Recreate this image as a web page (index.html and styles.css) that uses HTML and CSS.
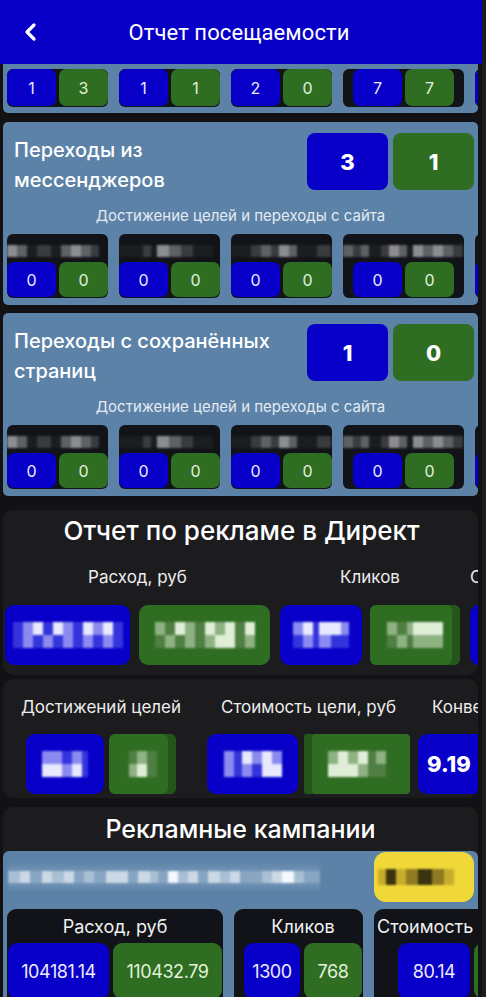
FILE: index.html
```html
<!DOCTYPE html>
<html lang="ru">
<head>
<meta charset="utf-8">
<title>Отчет посещаемости</title>
<link rel="stylesheet" href="styles.css">
</head>
<body>
<div class="app">
  <header class="topbar">
    <svg class="back" viewBox="0 0 14 20" aria-hidden="true"><path d="M11 3 L4 10 L11 17" fill="none" stroke="#fff" stroke-width="3.2" stroke-linecap="round" stroke-linejoin="round"/></svg>
    <h1>Отчет посещаемости</h1>
  </header>

  <main class="content">
    <section class="card card-partial">
      <div class="groups">
        <div class="group"><div class="pair"><div class="v blue">1</div><div class="v green">3</div></div></div>
        <div class="group"><div class="pair"><div class="v blue">1</div><div class="v green">1</div></div></div>
        <div class="group"><div class="pair"><div class="v blue">2</div><div class="v green">0</div></div></div>
        <div class="group wide"><div class="pair"><div class="v blue">7</div><div class="v green">7</div></div></div>
        <div class="group"><div class="pair"><div class="v blue">0</div><div class="v green">0</div></div></div>
      </div>
    </section>

    <section class="card">
      <div class="card-head">
        <h2>Переходы из<br>мессенджеров</h2>
        <div class="big-pair"><div class="big blue">3</div><div class="big green">1</div></div>
      </div>
      <p class="sub">Достижение целей и переходы с сайта</p>
      <div class="groups">
        <div class="group">
          <div class="glabel"><div class="pix"><i class="l w10"></i><i class="m w10"></i><i class="k w10"></i><i class="d w14"></i><i class="k w10"></i><i class="m w10"></i><i class="l w10"></i><i class="m w10"></i><i class="d w8"></i></div></div>
          <div class="pair"><div class="v blue">0</div><div class="v green">0</div></div>
        </div>
        <div class="group">
          <div class="glabel"><div class="pix"><i class="k w24"></i><i class="d w8"></i><i class="k w6"></i><i class="l w12"></i><i class="m w12"></i><i class="d w12"></i><i class="k w20"></i></div></div>
          <div class="pair"><div class="v blue">0</div><div class="v green">0</div></div>
        </div>
        <div class="group">
          <div class="glabel"><div class="pix"><i class="k w20"></i><i class="d w10"></i><i class="m w10"></i><i class="d w8"></i><i class="l w10"></i><i class="m w8"></i><i class="k w20"></i><i class="d w14"></i></div></div>
          <div class="pair"><div class="v blue">0</div><div class="v green">0</div></div>
        </div>
        <div class="group wide">
          <div class="glabel"><div class="pix"><i class="m w10"></i><i class="d w8"></i><i class="m w8"></i><i class="k w12"></i><i class="d w8"></i><i class="l w10"></i><i class="m w8"></i><i class="k w6"></i><i class="l w10"></i><i class="m w10"></i><i class="l w10"></i><i class="m w10"></i><i class="d w10"></i></div></div>
          <div class="pair"><div class="v blue">0</div><div class="v green">0</div></div>
        </div>
        <div class="group">
          <div class="glabel"></div>
          <div class="pair"><div class="v blue">0</div><div class="v green">0</div></div>
        </div>
      </div>
    </section>

    <section class="card">
      <div class="card-head">
        <h2>Переходы с сохранённых<br>страниц</h2>
        <div class="big-pair"><div class="big blue">1</div><div class="big green">0</div></div>
      </div>
      <p class="sub">Достижение целей и переходы с сайта</p>
      <div class="groups">
        <div class="group">
          <div class="glabel"><div class="pix"><i class="l w10"></i><i class="m w10"></i><i class="k w10"></i><i class="d w14"></i><i class="k w10"></i><i class="m w10"></i><i class="l w10"></i><i class="m w10"></i><i class="d w8"></i></div></div>
          <div class="pair"><div class="v blue">0</div><div class="v green">0</div></div>
        </div>
        <div class="group">
          <div class="glabel"><div class="pix"><i class="k w24"></i><i class="d w8"></i><i class="k w6"></i><i class="l w12"></i><i class="m w12"></i><i class="d w12"></i><i class="k w20"></i></div></div>
          <div class="pair"><div class="v blue">0</div><div class="v green">0</div></div>
        </div>
        <div class="group">
          <div class="glabel"><div class="pix"><i class="k w20"></i><i class="d w10"></i><i class="m w10"></i><i class="d w8"></i><i class="l w10"></i><i class="m w8"></i><i class="k w20"></i><i class="d w14"></i></div></div>
          <div class="pair"><div class="v blue">0</div><div class="v green">0</div></div>
        </div>
        <div class="group wide">
          <div class="glabel"><div class="pix"><i class="m w10"></i><i class="d w8"></i><i class="m w8"></i><i class="k w12"></i><i class="d w8"></i><i class="l w10"></i><i class="m w8"></i><i class="k w6"></i><i class="l w10"></i><i class="m w10"></i><i class="l w10"></i><i class="m w10"></i><i class="d w10"></i></div></div>
          <div class="pair"><div class="v blue">0</div><div class="v green">0</div></div>
        </div>
        <div class="group">
          <div class="glabel"></div>
          <div class="pair"><div class="v blue">0</div><div class="v green">0</div></div>
        </div>
      </div>
    </section>

    <section class="panel panel-direct">
      <h3 class="panel-title">Отчет по рекламе в Директ</h3>
      <div class="dcols">
        <div class="dcol">
          <div class="dlabel">Расход, руб</div>
          <div class="dboxes gap9">
            <div class="db blue w125">
              <div class="pix2 pb">
                <div class="prow"><i class="a w10"></i><i class="b w10"></i><i class="c w10"></i><i class="a w10"></i><i class="c w10"></i><i class="b w10"></i><i class="a w10"></i><i class="c w10"></i><i class="b w10"></i><i class="c w10"></i><i class="a w10"></i></div>
                <div class="prow"><i class="a w10"></i><i class="b w10"></i><i class="a w10"></i><i class="b w10"></i><i class="a w10"></i><i class="b w10"></i><i class="a w10"></i><i class="b w10"></i><i class="a w10"></i><i class="b w10"></i><i class="a w10"></i></div>
              </div>
            </div>
            <div class="db green w131">
              <div class="pix2 pg">
                <div class="prow"><i class="b w10"></i><i class="a w10"></i><i class="c w10"></i><i class="b w10"></i><i class="a w10"></i><i class="c w10"></i><i class="b w10"></i><i class="c w10"></i><i class="a w10"></i><i class="c w10"></i></div>
                <div class="prow"><i class="a w10"></i><i class="b w10"></i><i class="a w10"></i><i class="b w10"></i><i class="a w10"></i><i class="b w10"></i><i class="c w10"></i><i class="c w10"></i><i class="a w10"></i><i class="b w10"></i></div>
              </div>
            </div>
          </div>
        </div>
        <div class="dcol">
          <div class="dlabel">Кликов</div>
          <div class="dboxes gap8">
            <div class="db blue w82">
              <div class="pix2 pb">
                <div class="prow"><i class="b w10"></i><i class="c w10"></i><i class="a w6"></i><i class="c w12"></i><i class="c w10"></i><i class="b w8"></i></div>
                <div class="prow"><i class="a w10"></i><i class="b w10"></i><i class="a w6"></i><i class="b w12"></i><i class="a w10"></i><i class="a w8"></i></div>
              </div>
            </div>
            <div class="db green w90 edge">
              <div class="pix2 pg">
                <div class="prow"><i class="b w10"></i><i class="a w10"></i><i class="b w6"></i><i class="c w20"></i><i class="c w10"></i></div>
                <div class="prow"><i class="a w10"></i><i class="b w10"></i><i class="a w6"></i><i class="b w20"></i><i class="b w10"></i></div>
              </div>
            </div>
          </div>
        </div>
        <div class="dcol">
          <div class="dlabel">Стоимость клика, руб</div>
          <div class="dboxes gap8">
            <div class="db blue w82"></div>
          </div>
        </div>
      </div>
    </section>

    <section class="panel panel-goals">
      <div class="gcols">
        <div class="gcol c1">
          <div class="dlabel">Достижений целей</div>
          <div class="dboxes gap5">
            <div class="db blue w78">
              <div class="pix2 pb">
                <div class="prow"><i class="b w10"></i><i class="b w10"></i><i class="a w10"></i><i class="b w10"></i><i class="a w6"></i></div>
                <div class="prow"><i class="c w10"></i><i class="c w10"></i><i class="b w10"></i><i class="c w10"></i><i class="a w6"></i></div>
              </div>
            </div>
            <div class="db green w67 edge">
              <div class="pix2 pg">
                <div class="prow"><i class="a w8"></i><i class="b w10"></i><i class="a w10"></i></div>
                <div class="prow"><i class="b w8"></i><i class="c w10"></i><i class="a w10"></i></div>
              </div>
            </div>
          </div>
        </div>
        <div class="gcol c2">
          <div class="dlabel">Стоимость цели, руб</div>
          <div class="dboxes gap6">
            <div class="db blue w91">
              <div class="pix2 pb">
                <div class="prow"><i class="b w10"></i><i class="a w8"></i><i class="c w10"></i><i class="b w10"></i><i class="c w10"></i><i class="b w10"></i></div>
                <div class="prow"><i class="b w10"></i><i class="a w8"></i><i class="b w10"></i><i class="a w10"></i><i class="c w10"></i><i class="c w10"></i></div>
              </div>
            </div>
            <div class="db green w106 edgel">
              <div class="pix2 pg">
                <div class="prow"><i class="b w10"></i><i class="c w10"></i><i class="b w10"></i><i class="c w10"></i><i class="a w8"></i><i class="b w10"></i></div>
                <div class="prow"><i class="c w10"></i><i class="c w10"></i><i class="c w10"></i><i class="b w10"></i><i class="a w8"></i><i class="a w10"></i></div>
              </div>
            </div>
          </div>
        </div>
        <div class="gcol c3">
          <div class="dlabel">Конверсия, %</div>
          <div class="dboxes">
            <div class="db blue w70 strong">9.19</div>
          </div>
        </div>
      </div>
    </section>

    <section class="panel panel-camp">
      <h3 class="panel-title small">Рекламные кампании</h3>
      <div class="card camp-card">
        <div class="camp">
          <div class="pix3"><i class="b w12"></i><i class="c w10"></i><i class="a w12"></i><i class="c w10"></i><i class="b w12"></i><i class="c w10"></i><i class="a w10"></i><i class="b w10"></i><i class="a w12"></i><i class="c w10"></i><i class="c w12"></i><i class="a w10"></i><i class="c w12"></i><i class="b w8"></i><i class="a w10"></i><i class="w w10"></i><i class="b w10"></i><i class="c w10"></i><i class="a w10"></i><i class="c w12"></i><i class="b w10"></i><i class="c w10"></i><i class="a w12"></i><i class="a w10"></i><i class="b w10"></i><i class="c w10"></i><i class="w w12"></i><i class="b w10"></i><i class="a w10"></i><i class="a w6"></i></div>
          <div class="pill"><div class="pix4"><i class="x w8"></i><i class="k w10"></i><i class="x w10"></i><i class="m w12"></i><i class="k w14"></i><i class="m w12"></i><i class="x w10"></i></div></div>
        </div>
        <div class="groups2">
          <div class="grp g-spend">
            <div class="glab">Расход, руб</div>
            <div class="pair2"><div class="nb blue w101">104181.14</div><div class="nb green w109">110432.79</div></div>
          </div>
          <div class="grp g-clicks">
            <div class="glab">Кликов</div>
            <div class="pair2"><div class="nb blue w56">1300</div><div class="nb green w58">768</div></div>
          </div>
          <div class="grp g-cost">
            <div class="glab left">Стоимость</div>
            <div class="pair2"><div class="nb blue w72">80.14</div><div class="nb green w72">85.12</div></div>
          </div>
        </div>
      </div>
    </section>
  </main>
</div>
</body>
</html>
```

FILE: styles.css
```css
* { box-sizing: border-box; margin: 0; padding: 0; }
html, body { background: #1d1d1f; }
body {
  width: 486px;
  height: 997px;
  overflow: hidden;
  font-family: Inter, "Noto Sans", sans-serif;
  color: #fff;
}
.app { width: 482px; min-height: 997px; background: #121214; overflow: hidden; }

/* top bar */
.topbar {
  height: 64px;
  background: #0900c8;
  display: flex;
  align-items: center;
  justify-content: center;
  position: relative;
}
.back { position: absolute; left: 23px; top: 22px; width: 14px; height: 20px; }
.topbar h1 {
  font-family: Roboto, "Noto Sans", sans-serif;
  font-weight: 400;
  font-size: 22px;
  letter-spacing: 0.1px;
  margin-left: -4px;
}

.content { padding: 0 4px 0 3px; }

/* steel cards */
.card { background: #5c82a8; border-radius: 5px; overflow: hidden; }
.card + .card { margin-top: 8px; }
.card-partial {
  height: 49px;
  border-radius: 0 0 5px 5px;
  display: flex;
  align-items: flex-end;
  padding-bottom: 6px;
}
.card-partial + .card { margin-top: 9px; }
.card-partial .pair { height: 37px; }

.groups { display: flex; gap: 11px; padding-left: 4px; overflow: hidden; }
.group {
  flex: none;
  width: 101px;
  background: #111318;
  border-radius: 6px;
  display: flex;
  flex-direction: column;
  padding-bottom: 1px;
}
.group.wide { width: 121px; align-items: center; }
.glabel { height: 28px; width: 100%; position: relative; overflow: hidden; }
.pair { display: flex; gap: 3px; height: 35px; }
.v {
  width: 49px;
  border-radius: 7px;
  display: flex;
  align-items: center;
  justify-content: center;
  font-size: 16px;
  font-weight: 400;
}
.blue { background: #0800c8; color: #eceaff; }
.green { background: #2f6e22; color: #e2f1da; }

.card-head { display: flex; justify-content: space-between; height: 57px; margin-top: 11px; padding: 0 4px 0 11px; }
.card-head h2 { font-size: 20px; line-height: 30px; font-weight: 500; padding-top: 2px; }
.big-pair { display: flex; gap: 5px; }
.big {
  width: 81px;
  height: 57px;
  border-radius: 8px;
  display: flex;
  align-items: center;
  justify-content: center;
  font-size: 22px;
  font-weight: 800;
  color: #fff;
}
.sub {
  text-align: center;
  font-size: 15px;
  line-height: 20px;
  color: #e4eaf2;
  margin-top: 16px;
  margin-bottom: 8px;
}
.card .groups { padding-bottom: 7px; }
.card-partial .groups { padding-bottom: 0; }

/* pixelated placeholders */
.pix { position: absolute; left: 0; top: 11px; display: flex; filter: blur(0.8px); }
.pix i, .pix2 i, .pix3 i, .pix4 i { display: block; height: 12px; flex: none; }
.pix .k { background: #1c1d20; }
.pix .d { background: #3a3b3e; }
.pix .m { background: #5e6064; }
.pix .l { background: #8b8d91; }

.w6 { width: 6px; } .w8 { width: 8px; } .w10 { width: 10px; } .w12 { width: 12px; }
.w14 { width: 14px; } .w16 { width: 16px; } .w18 { width: 18px; } .w20 { width: 20px; } .w24 { width: 24px; }

/* dark panels */
.panel { background: #1c1c1f; border-radius: 10px; overflow: hidden; }
.panel-direct { margin-top: 14px; padding: 6px 0 10px 2px; }
.panel-title { text-align: center; font-size: 26px; line-height: 30px; font-weight: 500; }
.panel-title.small { font-size: 25px; }
.dcols { display: flex; gap: 10px; margin-top: 21px; }
.dcol { flex: none; display: flex; flex-direction: column; align-items: center; }
.dcol:last-child { align-items: flex-start; }
.dlabel { font-size: 17px; line-height: 20px; color: #ededed; white-space: nowrap; }
.dboxes { display: flex; margin-top: 18px; }
.gap9 { gap: 9px; } .gap8 { gap: 8px; } .gap6 { gap: 6px; } .gap5 { gap: 5px; }
.db {
  height: 60px;
  border-radius: 9px;
  display: flex;
  align-items: center;
  justify-content: center;
  flex: none;
}
.db.edge { box-shadow: inset -8px 0 0 #24561a; border-radius: 6px; }
.db.edgel { box-shadow: inset 8px 0 0 #24561a; border-radius: 4px; }
.w125 { width: 125px; } .w131 { width: 131px; } .w82 { width: 82px; } .w90 { width: 90px; }
.w78 { width: 78px; } .w67 { width: 67px; } .w91 { width: 91px; } .w106 { width: 106px; } .w70 { width: 70px; }

.pix2 { display: flex; flex-direction: column; filter: blur(1.1px); }
.prow { display: flex; }
.pix2 i { height: 13px; }
.pb .a { background: #3434dc; }
.pb .b { background: #8a8af0; }
.pb .c { background: #e8e8ff; }
.pg .a { background: #4f7f42; }
.pg .b { background: #8fb283; }
.pg .c { background: #e0eed8; }

.panel-goals { margin-top: 4px; padding: 18px 0 4px 8px; }
.gcols { display: flex; }
.gcol { flex: none; display: flex; flex-direction: column; align-items: center; }
.gcol .dboxes { margin-top: 17px; }
.c1 { width: 180px; margin-right: 16px; }
.c2 { width: 203px; margin-right: 8px; }
.c3 { align-items: flex-start; }
.c3 .dlabel { margin-left: 14px; }
.strong { font-size: 22px; font-weight: 800; color: #fff; justify-content: flex-start; padding-left: 9px; }

.panel-camp { margin-top: 9px; padding-top: 7px; border-radius: 10px 10px 0 0; }
.camp-card { margin-top: 7px; border-radius: 6px 6px 0 0; }
.camp { display: flex; align-items: flex-start; height: 52px; padding: 1px 4px 0 5px; }
.pix3 {
  display: flex;
  align-items: center;
  height: 31px;
  margin-top: 9px;
  background: linear-gradient(to bottom, rgba(140,170,200,0) 0, rgba(140,170,200,0.45) 35%, rgba(140,170,200,0.45) 70%, rgba(140,170,200,0) 100%);
  filter: blur(1.2px);
}
.pix3 i { height: 12px; }
.pix3 .a { background: #88a5c2; }
.pix3 .b { background: #a9bfd4; }
.pix3 .c { background: #cbd9e6; }
.pix3 .w { background: #f4f8fc; }
.pill {
  margin-left: auto;
  width: 100px;
  height: 50px;
  border-radius: 12px;
  background: #f0d838;
  display: flex;
  align-items: center;
  padding-left: 4px;
  overflow: hidden;
}
.pix4 { display: flex; filter: blur(1.2px); }
.pix4 i { height: 16px; }
.pix4 .x { background: #c8ad2a; }
.pix4 .k { background: #3b3210; }
.pix4 .m { background: #8e7a22; }

.groups2 { display: flex; gap: 11px; padding-left: 4px; margin-top: 6px; overflow: hidden; }
.grp {
  flex: none;
  background: #111318;
  border-radius: 9px 9px 0 0;
  padding: 8px 1px 0 1px;
  height: 90px;
}
.g-spend { width: 216px; }
.g-clicks { width: 129px; padding-left: 10px; }
.g-cost { width: 120px; padding-left: 3px; }
.glab { text-align: center; font-size: 18px; line-height: 20px; color: #f0f0f0; }
.glab.left { text-align: left; }
.pair2 { display: flex; gap: 4px; margin-top: 6px; }
.g-cost .pair2 { padding-left: 21px; }
.nb {
  flex: none;
  height: 56px;
  border-radius: 9px;
  display: flex;
  align-items: center;
  justify-content: center;
  font-size: 18px;
  letter-spacing: -0.4px;
}
.w101 { width: 101px; } .w109 { width: 109px; } .w56 { width: 56px; } .w58 { width: 58px; } .w72 { width: 72px; }
```
